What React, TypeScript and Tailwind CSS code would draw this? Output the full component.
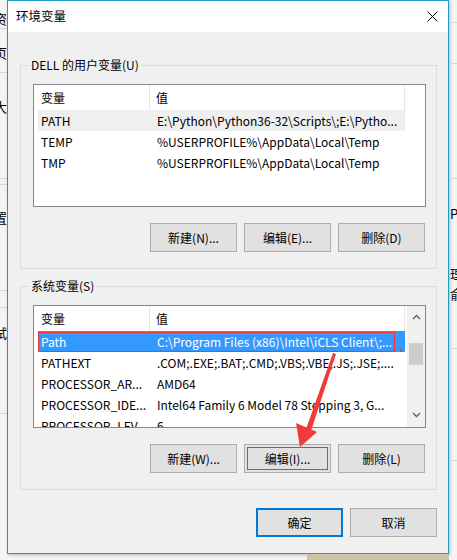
const userVars = [
  ['PATH', 'E:\\Python\\Python36-32\\Scripts\\;E:\\Pytho...'],
  ['TEMP', '%USERPROFILE%\\AppData\\Local\\Temp'],
  ['TMP', '%USERPROFILE%\\AppData\\Local\\Temp'],
]

const sysVars = [
  ['Path', 'C:\\Program Files (x86)\\Intel\\iCLS Client\\;...'],
  ['PATHEXT', '.COM;.EXE;.BAT;.CMD;.VBS;.VBE;.JS;.JSE;....'],
  ['PROCESSOR_AR...', 'AMD64'],
  ['PROCESSOR_IDE...', 'Intel64 Family 6 Model 78 Stepping 3, G...'],
  ['PROCESSOR_LEV...', '6'],
]

// desktop behind the dialog: [segment height, glyph offset, glyphs]
const leftStrip: [number, number, string[]][] = [
  [29, 12, ['资']],
  [44, 17, ['页']],
  [106, 27, ['大']],
  [6, 0, []],
  [106, 26, ['置']],
  [17, 0, []],
  [106, 18, ['试']],
]

const rightStrip: [number, number, string[]][] = [
  [23, 0, []],
  [41, 0, []],
  [115, 0, []],
  [170, 28, ['PU', '', '', '理', '俞']],
  [112, 0, []],
]

function Strip({ segs, left }: { segs: [number, number, string[]][]; left?: boolean }) {
  return (
    <div className={`flex h-full shrink-0 flex-col overflow-hidden text-[13px] leading-none ${left ? 'w-[7px]' : 'w-[8px]'}`}>
      {segs.map(([h, off, gs], i) => (
        <div
          key={i}
          className={`flex shrink-0 flex-col gap-[7px] border-b border-[#d6d6d6] ${left ? 'items-end' : 'items-start pl-[1px]'}`}
          style={{ height: h, paddingTop: off }}
        >
          {gs.map((g, j) => (
            <span key={j} className="h-[13px] whitespace-nowrap">{g}</span>
          ))}
        </div>
      ))}
    </div>
  )
}

function Chevron({ up }: { up?: boolean }) {
  return (
    <svg width="9" height="6" viewBox="0 0 9 6" className={up ? '' : 'rotate-180'}>
      <path d="M1 5 L4.5 1.5 L8 5" fill="none" stroke="#606060" strokeWidth="1.3" />
    </svg>
  )
}

function ListView({ rows, scroll, selected }: { rows: string[][]; scroll?: boolean; selected?: number }) {
  return (
    <div className="flex h-[123px] w-[393px] overflow-hidden border border-[#828790] bg-white">
      <div className="flex-1 overflow-hidden">
        <div className="flex h-[25px] items-center">
          <div className="flex h-full w-[116px] items-center border-r border-[#e5e5e5] pl-[7px]">变量</div>
          <div className="flex h-full w-[255px] items-center border-r border-[#e5e5e5] pl-[6px]">值</div>
        </div>
        {rows.map((r, i) => {
          const sel = selected === i
          const hover = !scroll && i === 0
          return (
            <div
              key={r[0]}
              className={`relative ml-[4px] flex h-[21px] w-[367px] items-center whitespace-nowrap ${
                sel ? 'bg-[#3399ff] text-white' : hover ? 'bg-[#efefef]' : ''
              }`}
            >
              <div className="w-[112px] overflow-hidden pl-[3px]">{r[0]}</div>
              <div className="flex-1 overflow-hidden pl-[7px]">{r[1]}</div>
              {sel && (
                <>
                  <div className="absolute left-0 top-[1px] h-[20px] w-[357px] border border-[#f03535]" />
                  <div className="absolute bottom-0 left-[362px] h-[3px] w-[2px] bg-[#f03535]" />
                </>
              )}
            </div>
          )
        })}
      </div>
      {scroll && (
        <div className="flex w-[18px] flex-col items-center bg-[#f0f0f0]">
          <div className="flex h-[20px] items-center pt-[2px]">
            <Chevron up />
          </div>
          <div className="mt-[17px] h-[22px] w-[14px] bg-[#cdcdcd]" />
          <div className="flex-1" />
          <div className="flex h-[20px] items-center pb-[4px]">
            <Chevron />
          </div>
        </div>
      )}
    </div>
  )
}

function Btn({ children, mark }: { children: React.ReactNode; mark?: boolean }) {
  return (
    <div className="relative flex h-[29px] w-[87px] items-center justify-center border border-[#adadad] bg-[#e1e1e1]">
      {children}
      {mark && <div className="absolute inset-[2px] border border-[#f03535]" />}
    </div>
  )
}

function Group({ label, rows, scroll, selected, btns, markEdit }: {
  label: string
  rows: string[][]
  scroll?: boolean
  selected?: number
  btns: string[]
  markEdit?: boolean
}) {
  return (
    <div className="relative ml-[12px] mr-[11px] border border-[#dcdcdc] pb-[16px] pl-[12px] pr-[10px] pt-[18px]">
      <span className="absolute left-[8px] top-[-10px] bg-[#f0f0f0] px-[2px] leading-[18px]">{label}</span>
      <ListView rows={rows} scroll={scroll} selected={selected} />
      <div className="mt-[16px] flex justify-end gap-[7px] pr-[1px]">
        <Btn>{btns[0]}</Btn>
        <Btn mark={markEdit}>{btns[1]}</Btn>
        <Btn>{btns[2]}</Btn>
      </div>
    </div>
  )
}

export default function App() {
  return (
    <div className="relative flex h-[560px] w-[457px] overflow-hidden bg-[#f4f4f4] font-['Noto_Sans_CJK_SC','Noto_Sans',sans-serif] text-[12px] text-black">
      <Strip segs={leftStrip} left />

      <div className="flex flex-col">
        {/* dialog */}
        <div className="flex h-[554px] w-[442px] flex-col border border-[#1c9dc4] bg-[#f0f0f0] shadow-[1px_1px_3px_rgba(0,0,0,0.25)]">
          <div className="flex h-[31px] items-center justify-between bg-white pl-[8px] pr-[10px] text-[12.5px]">
            <span>环境变量</span>
            <svg width="11" height="11" viewBox="0 0 11 11">
              <path d="M0.5 0.5 L10.5 10.5 M10.5 0.5 L0.5 10.5" stroke="#000" strokeWidth="1" />
            </svg>
          </div>
          <div className="mt-[33px]">
            <Group
              label="DELL 的用户变量(U)"
              rows={userVars}
              btns={['新建(N)...', '编辑(E)...', '删除(D)']}
            />
          </div>
          <div className="mt-[17px]">
            <Group
              label="系统变量(S)"
              rows={sysVars}
              scroll
              selected={0}
              btns={['新建(W)...', '编辑(I)...', '删除(L)']}
              markEdit
            />
          </div>
          <div className="mt-[18px] flex justify-end gap-[7px] pr-[11px]">
            <div className="flex h-[29px] w-[87px] items-center justify-center border-2 border-[#0078d7] bg-[#e1e1e1]">确定</div>
            <div className="flex h-[29px] w-[87px] items-center justify-center border border-[#adadad] bg-[#e1e1e1]">取消</div>
          </div>
        </div>
        <div className="flex flex-1">
          <div className="w-[300px]" />
          <div className="flex-1 bg-[#cfc0a8]" />
        </div>
      </div>

      <Strip segs={rightStrip} />

      {/* red annotation arrow */}
      <svg className="pointer-events-none absolute left-0 top-0" width="457" height="560">
        <polygon points="333,353 336,354 311,431 306,429" fill="#f03b3b" />
        <polygon points="296,423 317,432 300,447" fill="#f03b3b" />
      </svg>
    </div>
  )
}
